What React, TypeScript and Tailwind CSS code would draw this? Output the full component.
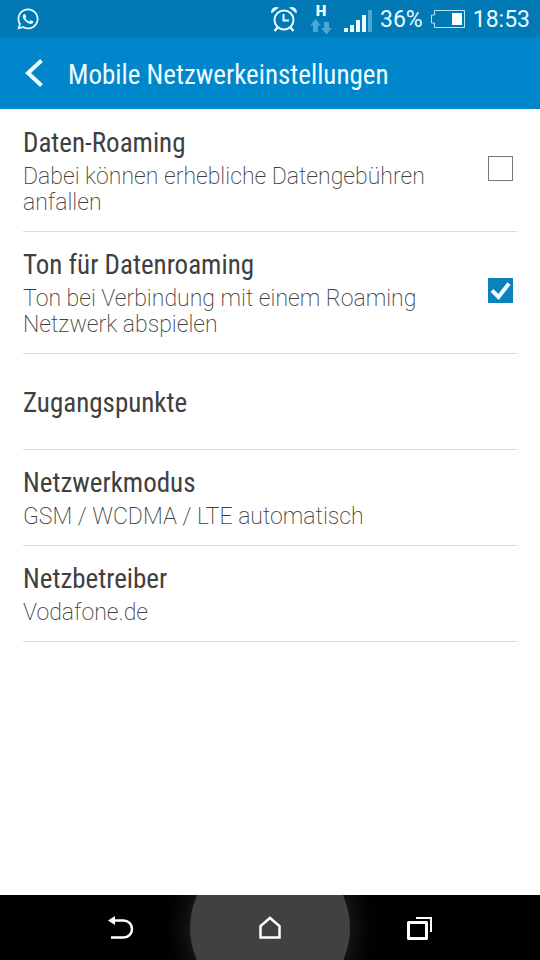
import { useState } from "react";
import { FaWhatsapp } from "react-icons/fa";

const titleFont = "font-['Roboto_Condensed','Liberation_Sans_Narrow',Roboto,sans-serif]";

const AlarmIcon = () => (
  <svg className="h-7 w-7" viewBox="0 0 28 28" fill="none" stroke="currentColor" strokeWidth="2" aria-hidden="true">
    <circle cx="14" cy="15" r="9.5" />
    <path d="M13.5 9v6.5H19" />
    <path d="M7.5 22.5 4.5 26M20.5 22.5l3 3.5" strokeWidth="2.5" />
    <path d="M1.5 8.5C0 4.5 4 .5 9 2.5zM26.5 8.5C28 4.5 24 .5 19 2.5z" fill="currentColor" stroke="none" />
  </svg>
);

const DataArrowsIcon = () => (
  <svg className="h-4 w-[22px] text-[#4ba6d3]" viewBox="0 0 22 16" fill="currentColor" aria-hidden="true">
    <path d="M5.5 0 11 6.5H8V13H3V6.5H0zM14 3h5v6h3l-5.5 6.5L11 9h3z" />
  </svg>
);

const SignalIcon = () => (
  <svg className="h-[22px] w-7" viewBox="0 0 28 22" fill="currentColor" aria-hidden="true">
    <path d="M0 18h4v4H0zM6 15h4v7H6zM12 10h4v12h-4zM18 5h4v17h-4z" />
    <path d="M24 0h4v22h-4z" fill="#4ba6d3" />
  </svg>
);

const BatteryIcon = () => (
  <svg className="h-[18px] w-[34px]" viewBox="0 0 34 18" fill="none" stroke="#b5e5f7" aria-hidden="true">
    <path d="M3.5 .5h30v17h-30V13h-3V5h3z" />
    <path d="M21 3h10v12H21z" fill="#fff" stroke="none" />
  </svg>
);

const StatusBar = () => (
  <div className="flex h-[37px] items-center bg-[#0079b4] pr-[10px] pl-4 text-[#e8fbff]">
    <FaWhatsapp className="h-6 w-6" />
    <div className="ml-auto flex items-center">
      <AlarmIcon />
      <div className="ml-3 flex flex-col items-center">
        <span className="text-[15px] leading-4 font-black text-white">H</span>
        <DataArrowsIcon />
      </div>
      <div className="ml-3 pt-1">
        <SignalIcon />
      </div>
      <span className="ml-2 pt-0.5 text-[23px] leading-7">36%</span>
      <div className="ml-2">
        <BatteryIcon />
      </div>
      <span className="ml-2 pt-0.5 text-[23px] leading-7">18:53</span>
    </div>
  </div>
);

const Header = () => (
  <header className="flex h-[72px] items-center bg-[#0086cb] pl-6 text-[#effcff]">
    <button type="button" aria-label="Zurück" className="mr-6">
      <svg className="h-7 w-5" viewBox="0 0 20 28" fill="none" stroke="currentColor" strokeWidth="4">
        <path d="M17.5 1.5 4 14l13.5 12.5" />
      </svg>
    </button>
    <h1 className={`pt-1 text-[27px] leading-8 ${titleFont}`}>Mobile Netzwerkeinstellungen</h1>
  </header>
);

interface SettingTextProps {
  title: string;
  summary?: string;
}

const SettingText = ({ title, summary }: SettingTextProps) => (
  <span className="block flex-1 pt-0.5">
    <span className={`block text-[27px] leading-8 text-[#404040] ${titleFont}`}>{title}</span>
    {summary && (
      <span className="mt-[5px] block text-[23px] leading-[26px] font-extralight text-[#404040]">{summary}</span>
    )}
  </span>
);

const ToggleSetting = ({ title, summary, initial }: SettingTextProps & { initial: boolean }) => {
  const [checked, setChecked] = useState(initial);

  return (
    <li className="border-b border-[#dcdcdc]">
      <label className="flex min-h-[121px] items-center gap-6 pr-1">
        <SettingText title={title} summary={summary} />
        <span className="grid shrink-0 pb-1">
          <input
            type="checkbox"
            checked={checked}
            onChange={(e) => setChecked(e.target.checked)}
            className="col-start-1 row-start-1 h-[25px] w-[25px] appearance-none border border-[#777] bg-white checked:border-[#0a82bd] checked:bg-[#0a82bd]"
          />
          {checked && (
            <svg
              className="pointer-events-none col-start-1 row-start-1 h-[25px] w-[25px]"
              viewBox="0 0 25 25"
              fill="none"
              stroke="#f2fdff"
              strokeWidth="4"
              aria-hidden="true"
            >
              <path d="M4 12.5 10.5 19 21 5.5" />
            </svg>
          )}
        </span>
      </label>
    </li>
  );
};

const LinkSetting = ({ title, summary }: SettingTextProps) => (
  <li className="border-b border-[#dcdcdc]">
    <button type="button" className="flex min-h-[95px] w-full items-center text-left">
      <SettingText title={title} summary={summary} />
    </button>
  </li>
);

const NavBar = () => (
  <nav className="grid h-[65px] grid-cols-[1fr_160px_1fr] grid-rows-[65px] overflow-hidden bg-black text-white">
    <button type="button" aria-label="Zurück" className="flex items-center justify-end pr-[56px]">
      <svg className="h-7 w-7" viewBox="0 0 28 28" fill="none" stroke="currentColor" strokeWidth="2.5">
        <path d="M8 6.5h9.500a8.500 8.500 0 0 1 0 17H5" />
        <path d="M2 6.5 9 2v9z" fill="currentColor" stroke="none" />
      </svg>
    </button>
    <button
      type="button"
      aria-label="Startseite"
      className="flex h-40 w-40 items-center justify-center self-center rounded-full bg-[#414141] shadow-[0_0_28px_2px_#262626]"
    >
      <svg className="h-7 w-7" viewBox="0 0 28 28" fill="none" stroke="currentColor" strokeWidth="2.5">
        <path d="M4.5 23.500V12L14 4l9.500 8v11.500z" />
      </svg>
    </button>
    <button type="button" aria-label="Letzte Apps" className="flex items-center pl-[56px]">
      <svg className="h-7 w-7" viewBox="0 0 28 28" fill="none" stroke="currentColor">
        <path d="M2.5 8.5h18v16h-18z" strokeWidth="3" strokeLinejoin="round" />
        <path d="M10 4h15v14" strokeWidth="2" />
      </svg>
    </button>
  </nav>
);

export default function App() {
  return (
    <div className="flex min-h-screen flex-col bg-white font-[Roboto,sans-serif]">
      <StatusBar />
      <Header />
      <main className="flex-1 px-[23px] pt-px">
        <ul>
          <ToggleSetting
            title="Daten-Roaming"
            summary="Dabei können erhebliche Datengebühren anfallen"
            initial={false}
          />
          <ToggleSetting
            title="Ton für Datenroaming"
            summary="Ton bei Verbindung mit einem Roaming Netzwerk abspielen"
            initial={true}
          />
          <LinkSetting title="Zugangspunkte" />
          <LinkSetting title="Netzwerkmodus" summary="GSM / WCDMA / LTE automatisch" />
          <LinkSetting title="Netzbetreiber" summary="Vodafone.de" />
        </ul>
      </main>
      <NavBar />
    </div>
  );
}
